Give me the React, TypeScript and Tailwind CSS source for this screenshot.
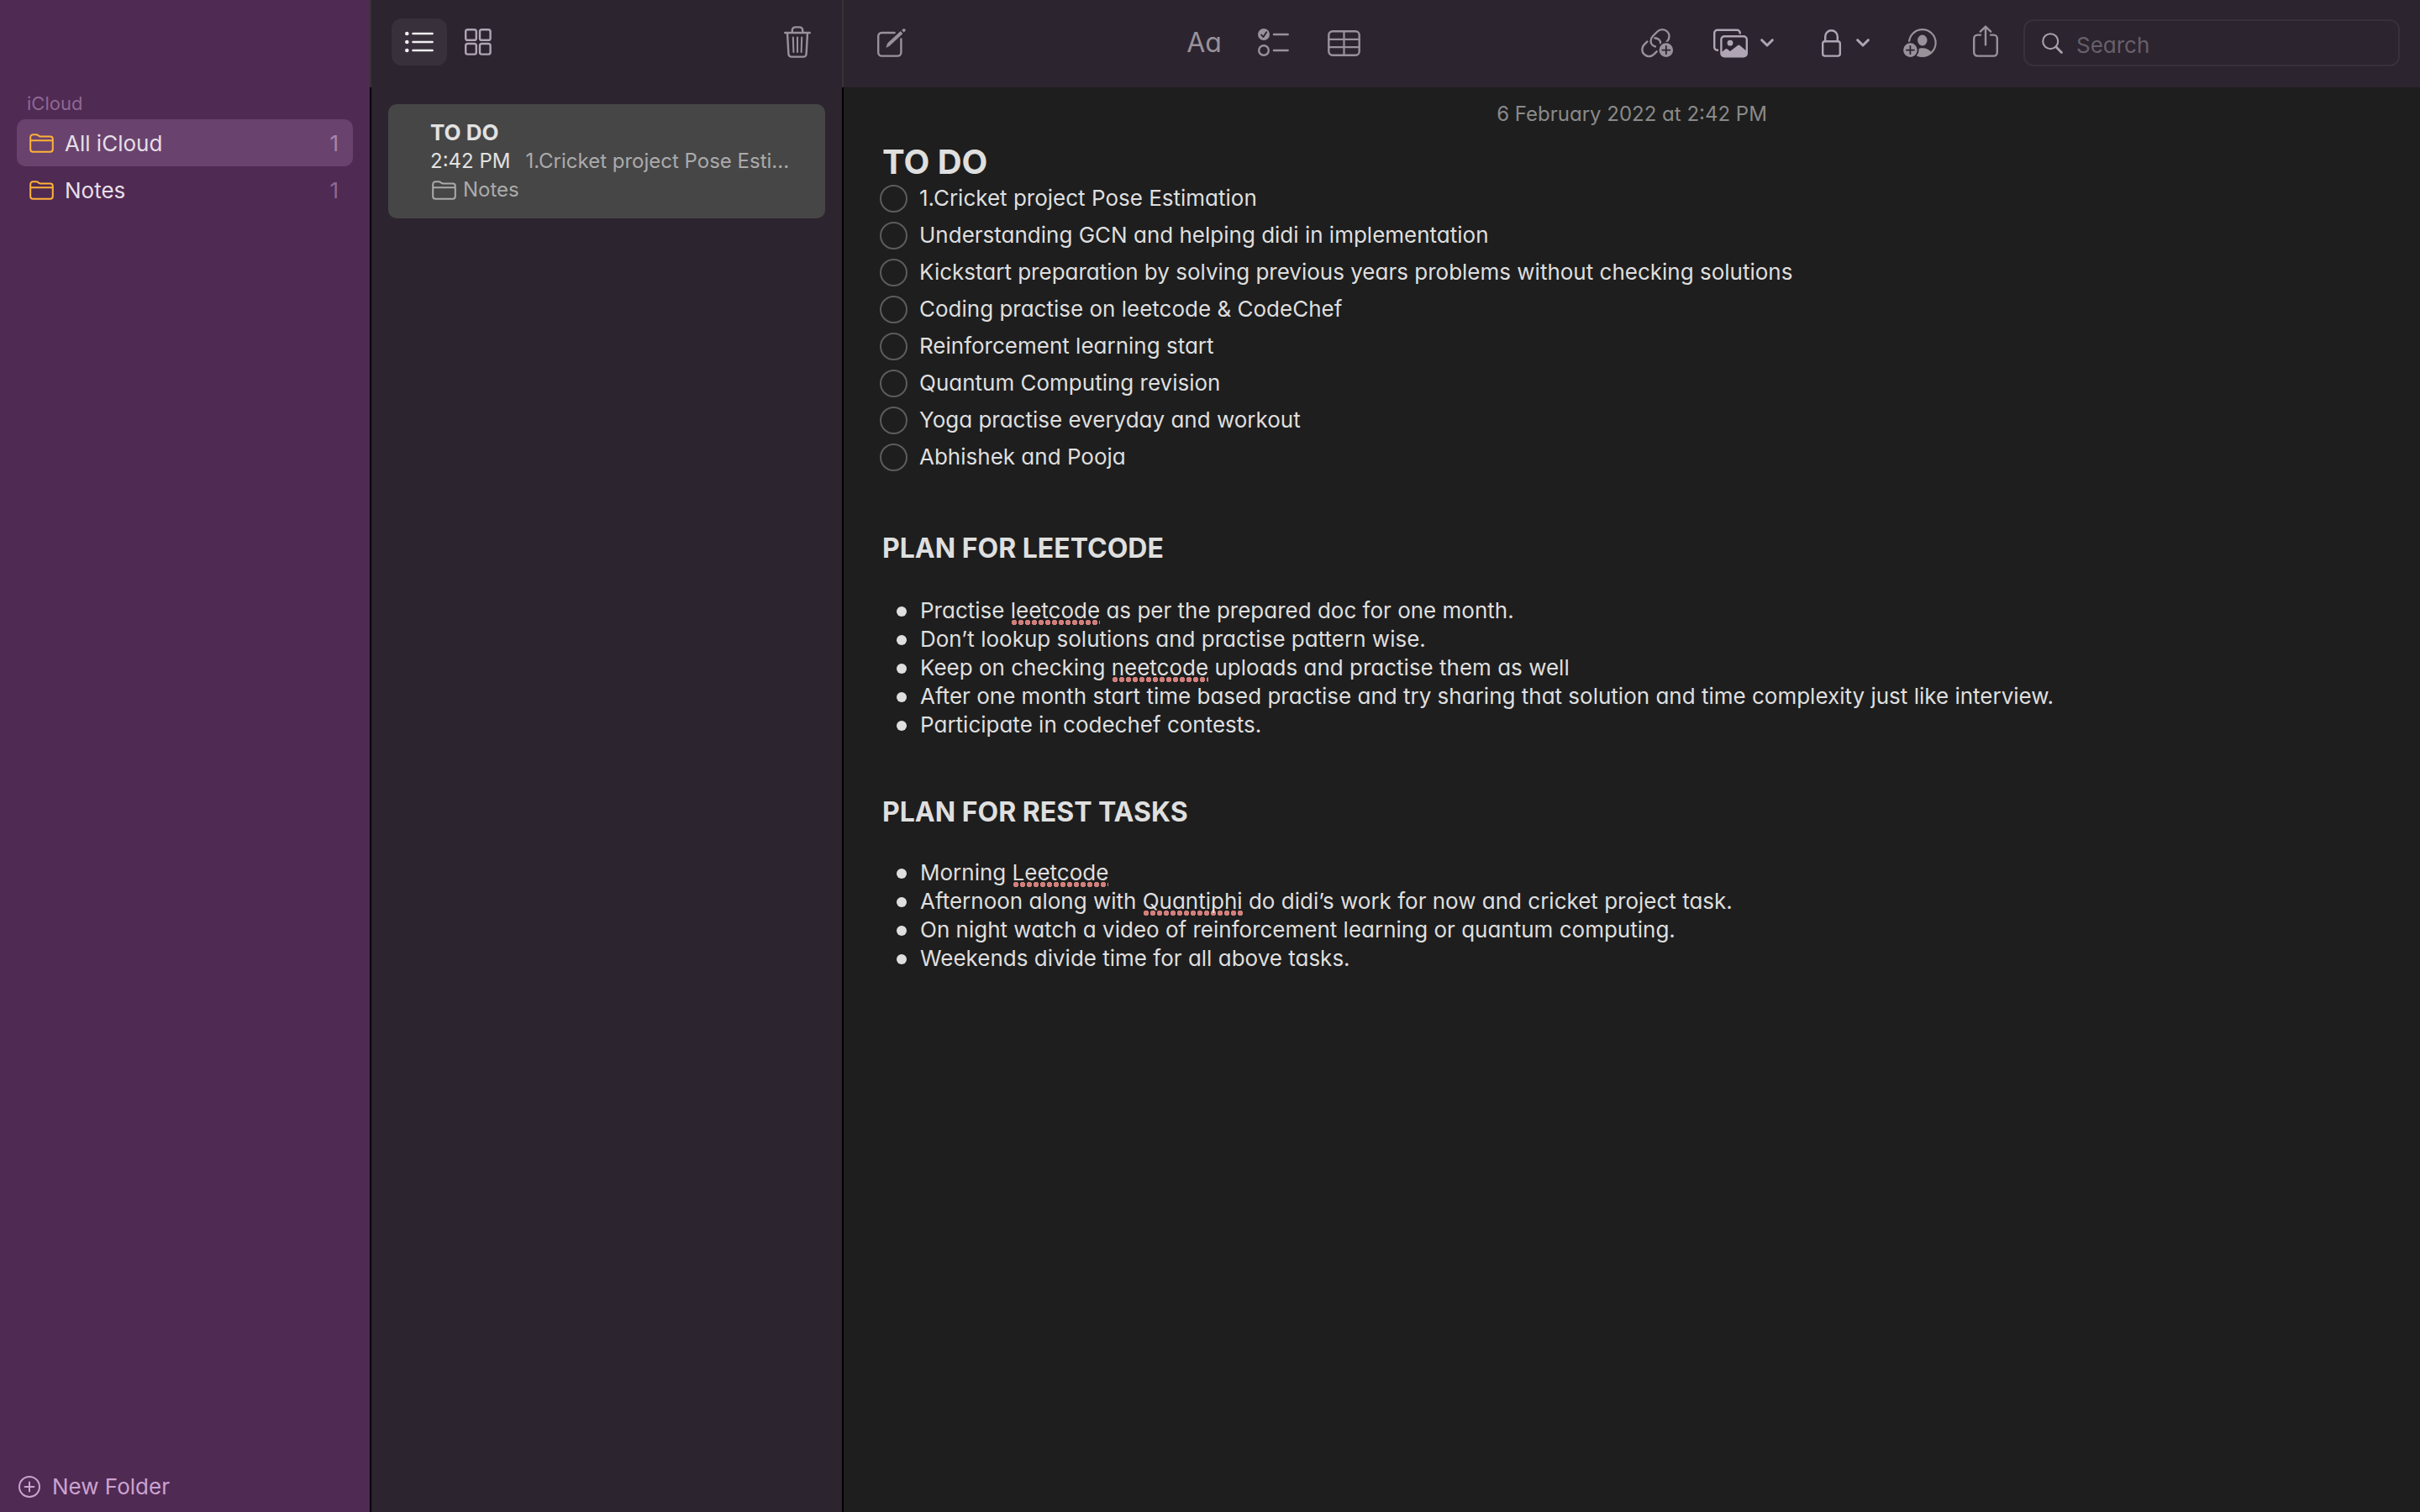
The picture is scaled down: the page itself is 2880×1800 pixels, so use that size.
import type { ReactNode } from "react";

const BAR = "#2c242f";

function Icon({ w, h, className, children }: { w: number; h: number; className?: string; children: ReactNode }) {
  return (
    <svg
      width={w}
      height={h}
      viewBox={`0 0 ${w} ${h}`}
      fill="none"
      stroke="currentColor"
      strokeWidth={2.4}
      strokeLinecap="round"
      strokeLinejoin="round"
      aria-hidden="true"
      className={`block shrink-0 ${className ?? ""}`}
    >
      {children}
    </svg>
  );
}

const folderPath =
  "M1.2 18.8V4.4A3.2 3.2 0 0 1 4.4 1.2H8C9 1.2 9.6 1.4 10.4 2.1L11.2 2.7C11.8 3.2 12.4 3.4 13.3 3.4H24.8A3 3 0 0 1 27.8 6.4V18.8A3 3 0 0 1 24.8 21.8H4.2A3 3 0 0 1 1.2 18.8ZM1.2 8.2H27.8";

function FolderIcon({ className }: { className?: string }) {
  return (
    <Icon w={29} h={23} className={className}>
      <path d={folderPath} strokeWidth={2} />
    </Icon>
  );
}

function ListIcon() {
  return (
    <Icon w={34} h={26}>
      <g fill="currentColor" stroke="none">
        <circle cx="2.3" cy="3" r="2.3" />
        <circle cx="2.3" cy="13" r="2.3" />
        <circle cx="2.3" cy="23" r="2.3" />
      </g>
      <path d="M9.5 3H32.6M9.5 13H32.6M9.5 23H32.6" strokeWidth={2.6} />
    </Icon>
  );
}

function GridIcon() {
  return (
    <Icon w={32} h={32}>
      <rect x="1.2" y="1.2" width="12.6" height="12.6" rx="2.4" />
      <rect x="18" y="1.2" width="12.6" height="12.6" rx="2.4" />
      <rect x="1.2" y="18" width="12.6" height="12.6" rx="2.4" />
      <rect x="18" y="18" width="12.6" height="12.6" rx="2.4" />
    </Icon>
  );
}

function TrashIcon() {
  return (
    <Icon w={32} h={38}>
      <path d="M1.2 8H30.8M9.8 7.6V5A3.6 3.6 0 0 1 13.4 1.4H18.6A3.6 3.6 0 0 1 22.2 5V7.6" />
      <path d="M4 8.4L5.4 33.2A3.4 3.4 0 0 0 8.8 36.6H23.2A3.4 3.4 0 0 0 26.6 33.2L28 8.4" />
      <path d="M10.8 13.4L11.4 31M16 13.4V31M21.2 13.4L20.6 31" strokeWidth={2} />
    </Icon>
  );
}

function ComposeIcon() {
  return (
    <Icon w={34} h={34}>
      <path d="M20.6 5H5.2A4 4 0 0 0 1.2 9V28.6A4 4 0 0 0 5.2 32.6H24.4A4 4 0 0 0 28.4 28.6V12.4" />
      <path
        d="M11 22L12.6 17.4L27.6 3.6L30 6L14.8 20.2Z"
        fill="currentColor"
        strokeWidth={0.8}
      />
      <path d="M29.4 1.9L30.9 0.6A1.6 1.6 0 0 1 33.1 2.9L31.7 4.2Z" fill="currentColor" strokeWidth={0.4} />
    </Icon>
  );
}

function ChecklistIcon() {
  return (
    <Icon w={37} h={34}>
      <circle cx="7" cy="7" r="7" fill="currentColor" stroke="none" />
      <path d="M4 7.4L6.4 10L10.2 4.2" stroke={BAR} strokeWidth={1.8} />
      <circle cx="7" cy="26" r="5.8" />
      <path d="M19 7H35.6M19 26H35.6" strokeWidth={2.6} />
    </Icon>
  );
}

function TableIcon() {
  return (
    <Icon w={39} h={31}>
      <rect x="1.3" y="1.3" width="36.4" height="28.4" rx="4.4" />
      <path d="M19.5 1.3V29.7M1.3 10.8H37.7M1.3 20.2H37.7" strokeWidth={2.2} />
    </Icon>
  );
}

function LinkIcon() {
  return (
    <Icon w={39} h={36}>
      <g strokeLinecap="butt">
        <path d="M18 22.6C14.4 22 11.6 19.4 11.5 16C11.4 13.6 12.4 11.6 14 10L19.5 4.5A8.2 8.2 0 0 1 31.1 16.1L29.4 17.8" />
        <path d="M8 15.8L3.7 20.1A8.2 8.2 0 0 0 15.3 31.7L19.4 27.6" />
        <path d="M15.4 12.2C20.4 12 23.6 15.2 23.4 19.8" />
      </g>
      <circle cx="29.8" cy="26.6" r="10.2" fill={BAR} stroke="none" />
      <circle cx="29.8" cy="26.6" r="8.3" fill="currentColor" stroke="none" />
      <path d="M29.8 22V31.2M25.2 26.6H34.4" stroke={BAR} strokeWidth={1.8} />
    </Icon>
  );
}

function PhotosIcon() {
  return (
    <Icon w={41} h={35}>
      <rect x="1.2" y="1.8" width="30.6" height="24" rx="3.6" />
      <rect x="6" y="6.4" width="35" height="28.6" rx="5" fill={BAR} stroke="none" />
      <rect x="9.4" y="9.2" width="30.4" height="24" rx="3.8" />
      <circle cx="20" cy="17.2" r="3.4" fill="currentColor" stroke="none" />
      <path
        d="M9.4 28.4L14.4 24.4C15.2 23.7 16 23.8 16.8 24.4L20 27L28.8 20.2C29.8 19.4 30.8 19.4 31.8 20.2L39.8 27V29.4A3.8 3.8 0 0 1 36 33.2H13.2A3.8 3.8 0 0 1 9.4 29.4Z"
        fill="currentColor"
        stroke="none"
      />
    </Icon>
  );
}

function ChevronIcon() {
  return (
    <Icon w={16} h={10}>
      <path d="M1.7 1.7L8 8L14.3 1.7" strokeWidth={3} />
    </Icon>
  );
}

function LockIcon() {
  return (
    <Icon w={23} h={33}>
      <rect x="1.2" y="14.2" width="20.6" height="17.4" rx="2.6" />
      <path d="M4.2 14V8.6A7.3 7.3 0 0 1 18.8 8.6V14" />
    </Icon>
  );
}

function PersonIcon() {
  return (
    <Icon w={40} h={34}>
      <circle cx="22.8" cy="17" r="15.8" strokeWidth={2.2} />
      <ellipse cx="22.8" cy="14" rx="5.7" ry="6.4" fill="currentColor" stroke="none" />
      <path d="M12.6 30C14.2 25.6 18 23.2 22.8 23.2S31.4 25.2 33.4 28.6C30 32 27 33.2 22.8 33.2S15.4 32 12.6 30Z" fill="currentColor" stroke="none" />
      <circle cx="8.4" cy="25.6" r="10.2" fill={BAR} stroke="none" />
      <circle cx="8.4" cy="25.6" r="8.3" fill="currentColor" stroke="none" />
      <path d="M8.4 21V30.2M3.8 25.6H13" stroke={BAR} strokeWidth={1.8} />
    </Icon>
  );
}

function ShareIcon() {
  return (
    <Icon w={30} h={38}>
      <path d="M9 11.6H5.2A4 4 0 0 0 1.2 15.6V32.6A4 4 0 0 0 5.2 36.6H24.8A4 4 0 0 0 28.8 32.6V15.6A4 4 0 0 0 24.8 11.6H21" />
      <path d="M15 1.6V23.4M8.8 7.6L15 1.6L21.2 7.6" />
    </Icon>
  );
}

function SearchIcon() {
  return (
    <Icon w={25} h={25} className="text-[#a8a2aa]">
      <circle cx="10.2" cy="10.2" r="9" strokeWidth={2.1} />
      <path d="M16.8 16.8L23.4 23.4" strokeWidth={2.8} />
    </Icon>
  );
}

function PlusCircleIcon() {
  return (
    <Icon w={26} h={26}>
      <circle cx="13" cy="13" r="12" strokeWidth={2} />
      <path d="M13 7.6V18.4M7.6 13H18.4" strokeWidth={2} />
    </Icon>
  );
}

const folders = [
  { name: "All iCloud", count: 1, selected: true },
  { name: "Notes", count: 1, selected: false },
];

const todos = [
  "1.Cricket project Pose Estimation",
  "Understanding GCN and helping didi in implementation",
  "Kickstart preparation by solving previous years problems without checking solutions",
  "Coding practise on leetcode & CodeChef",
  "Reinforcement learning start",
  "Quantum Computing revision",
  "Yoga practise everyday and workout",
  "Abhishek and Pooja",
];

function Misspelt({ children }: { children: ReactNode }) {
  return (
    <span className="bg-[radial-gradient(circle,#d27f7c_3px,transparent_3px)] bg-[length:8px_6px] bg-bottom-left bg-repeat-x pb-0.5">
      {children}
    </span>
  );
}

function Bullets({ items }: { items: ReactNode[] }) {
  return (
    <ul className="px-5 text-[26px] leading-[34px]">
      {items.map((item, i) => (
        <li key={i} className="flex gap-4">
          <span className="mt-3 size-3 shrink-0 rounded-full bg-[#dfdfdf]" />
          <span>{item}</span>
        </li>
      ))}
    </ul>
  );
}

function Sidebar() {
  return (
    <aside className="flex w-[440px] shrink-0 flex-col bg-[#4f2a53] pt-[106px]">
      <h2 className="px-8 pb-0.5 text-[22px] leading-[34px] text-[#8e6893]">iCloud</h2>
      <nav aria-label="Folders" className="px-5">
        {folders.map((f) => (
          <a
            key={f.name}
            href="#"
            className={`flex h-14 items-center rounded-[10px] pr-[17px] pl-[15px] text-[26px] text-[#e6dfe7] ${
              f.selected ? "bg-[#69436d]" : ""
            }`}
          >
            <FolderIcon className="text-[#ffb238]" />
            <span className="ml-[13px] flex-1">{f.name}</span>
            <span className={f.selected ? "text-[#aa84ae]" : "text-[#8e6893]"}>{f.count}</span>
          </a>
        ))}
      </nav>
      <button type="button" className="mt-auto flex items-center gap-[14px] px-[22px] pb-3 text-[26px] leading-9 text-[#cba3d1]">
        <PlusCircleIcon />
        New Folder
      </button>
    </aside>
  );
}

function NoteList() {
  return (
    <section aria-label="Notes" className="flex w-[562px] shrink-0 flex-col bg-[#2c242f]">
      <header className="flex h-[104px] items-center border-l-2 border-[#343434] pr-[37px] pb-1 pl-6 text-[#afa5b4]">
        <button type="button" aria-label="List view" className="flex h-14 w-[66px] items-center justify-center rounded-[12px] bg-[#38303b] text-[#f1eff2]">
          <ListIcon />
        </button>
        <button type="button" aria-label="Gallery view" className="ml-[21px]">
          <GridIcon />
        </button>
        <button type="button" aria-label="Delete" className="ml-auto text-[#99929b]">
          <TrashIcon />
        </button>
      </header>
      <div className="flex-1 border-l-2 border-black p-5">
        <article className="rounded-[10px] bg-[#464646] px-[50px] pt-[17px] pb-[17px] text-[24px] leading-[34px] text-[#ababab]">
          <h3 className="text-[26px] font-bold text-[#e2e2e2]">TO DO</h3>
          <p className="flex gap-[18px] whitespace-nowrap">
            <time className="text-[#e2e2e2]">2:42 PM</time>
            <span>1.Cricket project Pose Esti...</span>
          </p>
          <p className="flex items-center gap-2 pl-0.5">
            <FolderIcon />
            Notes
          </p>
        </article>
      </div>
    </section>
  );
}

function Toolbar() {
  return (
    <header className="flex h-[104px] items-center justify-between border-l-2 border-[#343434] bg-[#2c242f] pr-6 pb-0.5 pl-10 text-[#99929b]">
      <button type="button" aria-label="New note">
        <ComposeIcon />
      </button>
      <div className="flex items-center">
        <button type="button" aria-label="Format" className="text-[32px] leading-10">
          Aa
        </button>
        <button type="button" aria-label="Checklist" className="ml-[43px]">
          <ChecklistIcon />
        </button>
        <button type="button" aria-label="Table" className="ml-[46px]">
          <TableIcon />
        </button>
      </div>
      <div className="flex items-center">
        <button type="button" aria-label="Add link">
          <LinkIcon />
        </button>
        <button type="button" aria-label="Media" className="ml-[47px] flex items-center gap-[15px] text-[#afa5b4]">
          <PhotosIcon />
          <ChevronIcon />
        </button>
        <button type="button" aria-label="Lock" className="ml-[57px] flex items-center gap-[18px] text-[#afa5b4]">
          <LockIcon />
          <ChevronIcon />
        </button>
        <button type="button" aria-label="Add people" className="ml-10">
          <PersonIcon />
        </button>
        <button type="button" aria-label="Share" className="ml-[43px] pb-1">
          <ShareIcon />
        </button>
        <label className="ml-[30px] flex h-14 w-[448px] items-center gap-4 rounded-[12px] border-2 border-[#38303b] px-5">
          <SearchIcon />
          <input
            type="search"
            aria-label="Search"
            placeholder="Search"
            className="min-w-0 flex-1 bg-transparent pt-1 text-[26px] text-[#dfdfdf] outline-none placeholder:text-[#67606a]"
          />
        </label>
      </div>
    </header>
  );
}

export default function App() {
  return (
    <div className="flex min-h-screen bg-[#1e1e1e] font-['Inter',sans-serif] [font-feature-settings:'cv11']">
      <Sidebar />
      <NoteList />
      <main className="flex min-w-0 flex-1 flex-col">
        <Toolbar />
        <article className="flex-1 border-l-2 border-black text-[#dfdfdf]">
          <p className="pt-4 text-center text-[24px] leading-8 text-[#8a8a8a]">6 February 2022 at 2:42 PM</p>
          <div className="px-[43px] pt-5">
            <h1 className="px-[3px] text-[40px] leading-[42px] font-bold">TO DO</h1>
            <ul className="text-[26px] leading-[44px]">
              {todos.map((t) => (
                <li key={t}>
                  <label className="flex items-center gap-[14px]">
                    <input type="checkbox" className="size-[33px] shrink-0 appearance-none rounded-full border-2 border-[#5c5c5c]" />
                    {t}
                  </label>
                </li>
              ))}
            </ul>
            <h2 className="px-[3px] pt-[67px] pb-[37px] text-[32px] leading-10 font-bold">PLAN FOR LEETCODE</h2>
            <Bullets
              items={[
                <>
                  Practise <Misspelt>leetcode</Misspelt> as per the prepared doc for one month.
                </>,
                "Don’t lookup solutions and practise pattern wise.",
                <>
                  Keep on checking <Misspelt>neetcode</Misspelt> uploads and practise them as well
                </>,
                "After one month start time based practise and try sharing that solution and time complexity just like interview.",
                "Participate in codechef contests.",
              ]}
            />
            <h2 className="px-[3px] pt-[67px] pb-[35px] text-[32px] leading-10 font-bold">PLAN FOR REST TASKS</h2>
            <Bullets
              items={[
                <>
                  Morning <Misspelt>Leetcode</Misspelt>
                </>,
                <>
                  Afternoon along with <Misspelt>Quantiphi</Misspelt> do didi’s work for now and cricket project task.
                </>,
                "On night watch a video of reinforcement learning or quantum computing.",
                "Weekends divide time for all above tasks.",
              ]}
            />
          </div>
        </article>
      </main>
    </div>
  );
}
